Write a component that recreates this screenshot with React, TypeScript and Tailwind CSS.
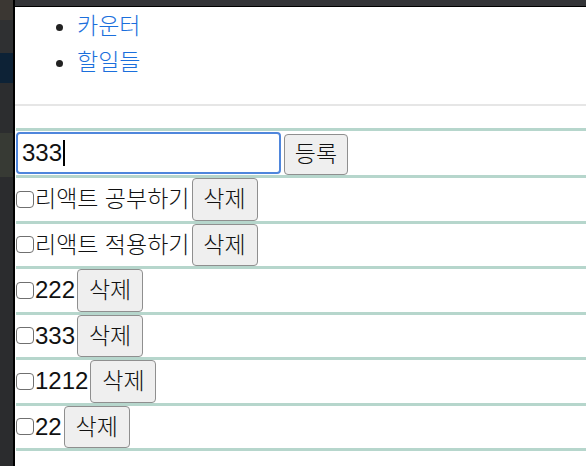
import React from 'react';

const todos = [
  { id: 1, text: '리액트 공부하기', ko: true },
  { id: 2, text: '리액트 적용하기', ko: true },
  { id: 3, text: '222', ko: false },
  { id: 4, text: '333', ko: false },
  { id: 5, text: '1212', ko: false },
  { id: 6, text: '22', ko: false },
];

const Ko: React.FC<{ children: React.ReactNode }> = ({ children }) => (
  <span className="text-[23px] font-light">{children}</span>
);

const App: React.FC = () => {
  return (
    <div className="flex min-h-[466px] w-[586px] overflow-hidden bg-white font-['Liberation_Sans','Noto_Sans_CJK_KR',sans-serif] text-[24px] text-[#111]">
      {/* editor sidebar strip */}
      <aside className="flex w-[15px] shrink-0 flex-col border-r-2 border-black">
        <div className="h-[20px] bg-[#3b3733]" />
        <div className="h-[33px] bg-[#2f3032]" />
        <div className="h-[30px] bg-[#0d2236]" />
        <div className="h-[50px] bg-[#2c2d2f]" />
        <div className="h-[44px] bg-[#373a34]" />
        <div className="flex-1 bg-[#2b2c2e]" />
      </aside>

      <main className="flex min-w-0 flex-1 flex-col">
        <div className="box-content h-[6px] border-b border-black bg-[#343538]" />

        {/* nav */}
        <ul className="mt-[1px] mb-[24px] list-disc pl-[62px] leading-[36px]">
          <li className="marker:text-[#222]">
            <a className="text-[#1b6fdc]">
              <Ko>카운터</Ko>
            </a>
          </li>
          <li className="marker:text-[#222]">
            <a className="text-[#1b6fdc]">
              <Ko>할일들</Ko>
            </a>
          </li>
        </ul>
        <hr className="h-[2px] border-0 bg-[#e6e6e6]" />

        {/* todo */}
        <div className="mt-[22px] ml-[1px] border-t-[3px] border-[#b6d6cc]">
          <form className="box-content flex h-[44px] items-center border-b-[3px] border-[#b6d6cc]">
            <div className="flex h-[42px] w-[265px] items-center rounded-[4px] border-2 border-[#4f86dc] pl-[4px]">
              <span>333</span>
              <span className="ml-[1px] h-[26px] w-[1.5px] bg-black" />
            </div>
            <button
              type="button"
              className="ml-[3px] flex h-[41px] w-[64px] items-center justify-center self-end rounded-[4px] border border-[#8f8f8f] bg-[#efefef]"
            >
              <Ko>등록</Ko>
            </button>
          </form>

          {todos.map((t) => (
            <div
              key={t.id}
              className="box-content flex h-[42.5px] items-stretch border-b-[3px] border-[#b6d6cc]"
            >
              <div className="flex items-center">
                <span className="mr-[1px] block h-[17px] w-[18px] shrink-0 rounded-[4px] border-[1.5px] border-[#707070]" />
                {t.ko ? <Ko>{t.text}</Ko> : <span>{t.text}</span>}
              </div>
              <button
                type="button"
                className="ml-[2px] flex w-[66px] items-center justify-center rounded-[4px] border border-[#8f8f8f] bg-[#efefef]"
              >
                <Ko>삭제</Ko>
              </button>
            </div>
          ))}
        </div>
      </main>
    </div>
  );
};

export default App;
